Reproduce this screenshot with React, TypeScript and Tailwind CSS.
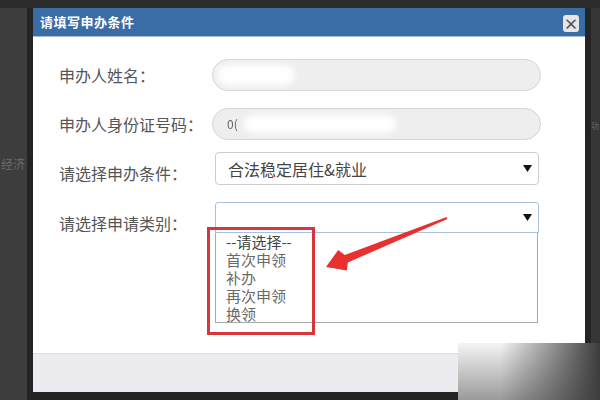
import React from "react";

const options = ["--请选择--", "首次申领", "补办", "再次申领", "换领"];

function Caret() {
  return (
    <svg width="9" height="7" viewBox="0 0 9 7">
      <path d="M0 0 L9 0 L4.5 7 Z" fill="#111" />
    </svg>
  );
}

export default function App() {
  return (
    <div className="relative w-[600px] h-[400px] overflow-hidden bg-[#3c3c3c] flex flex-col font-['Noto_Sans_CJK_SC','Noto_Sans',sans-serif]">
      <div className="h-[8px] bg-[#2c2c2c]" />
      <div className="flex flex-1 min-h-0">
        {/* backdrop left */}
        <div className="w-[27px] bg-[#3d3d3d] overflow-hidden pt-[147px] pl-[1px]">
          <div className="whitespace-nowrap text-[12px] text-[#6b6b6b]">经济</div>
        </div>

        {/* modal */}
        <div className="w-[564px] border-x-[6px] border-b-[8px] border-[#242424] flex flex-col">
          <div className="h-[29px] bg-[#3a6da6] border-b border-[#a5bedc] flex items-center justify-between pl-[7px] pr-[6px]">
            <span className="text-[13px] font-bold text-white tracking-[0.5px]">请填写申办条件</span>
            <div className="mt-[2px] w-[16px] h-[17px] rounded-[3px] bg-[#e6e6e6] flex items-center justify-center text-[#555] text-[15px] font-bold leading-none">
              ×
            </div>
          </div>

          <div className="flex-1 bg-white pl-[26px] text-[16px] text-[#555]">
            <div className="mt-[22px] flex items-center h-[32px]">
              <div className="w-[153px]">申办人姓名：</div>
              <div className="w-[329px] h-[32px] rounded-full bg-[#eeeeef] border border-[#d6d6d6] flex items-center pl-[4px]">
                <div className="w-[78px] h-[20px] rounded-full bg-white blur-[3px]" />
              </div>
            </div>

            <div className="mt-[17px] flex items-center h-[32px]">
              <div className="w-[153px]">申办人身份证号码：</div>
              <div className="w-[329px] h-[32px] rounded-full bg-[#eeeeef] border border-[#d6d6d6] flex items-center pl-[14px]">
                <span className="text-[12px] text-[#666] blur-[0.5px]">0(</span>
                <div className="ml-[6px] w-[152px] h-[18px] rounded-full bg-white blur-[3px]" />
              </div>
            </div>

            <div className="mt-[12px] flex items-center h-[33px]">
              <div className="w-[153px] mt-[8px]">请选择申办条件：</div>
              <div className="ml-[3px] w-[324px] h-[33px] rounded-[4px] border border-[#cccccc] flex items-center justify-between pl-[12px] pr-[6px] text-[#444]">
                <span>合法稳定居住&amp;就业</span>
                <Caret />
              </div>
            </div>

            <div className="mt-[17px] flex items-start">
              <div className="w-[153px] h-[31px] flex items-center mt-[5px]">请选择申请类别：</div>
              <div className="ml-[3px] flex flex-col">
                <div className="w-[324px] h-[31px] rounded-t-[3px] border border-[#a9c1dd] flex items-center justify-end pr-[6px]">
                  <Caret />
                </div>
                <div className="w-[323px] h-[90px] border border-t-0 border-[#a8a8a8] pl-[10px] flex flex-col text-[15px]">
                  {options.map((o, i) => (
                    <div key={o} className={"leading-[18px] " + (i === 0 ? "text-[#444]" : "text-[#6a6a6a]")}>
                      {o}
                    </div>
                  ))}
                </div>
              </div>
            </div>
          </div>

          <div className="h-[39px] bg-[#ecebef] border-t border-[#dcdcdc]" />
        </div>

        {/* backdrop right */}
        <div className="w-[9px] bg-[#363636] overflow-hidden pt-[112px]">
          <div className="whitespace-nowrap text-[8px] text-[#6b6b6b]">功</div>
        </div>
      </div>

      {/* annotation: red box */}
      <div className="absolute left-[207px] top-[227px] w-[108px] h-[108px] border-[3px] border-[#d8363a]" />

      {/* annotation: red arrow */}
      <svg className="absolute inset-0 pointer-events-none" width="600" height="400" viewBox="0 0 600 400">
        <polygon
          points="326,267 346.8,270.5 347.9,262.4 447.4,219 446.6,217 344.8,255 338.2,250"
          fill="#e8302f"
        />
      </svg>

      {/* watermark corner */}
      <div className="absolute left-[458px] top-[343px] w-[142px] h-[57px] bg-[linear-gradient(to_bottom,#f4f4f4,#9a9a9a)]">
        <div className="w-full h-full bg-[linear-gradient(to_right,transparent_30%,#3c3c3c)]" />
      </div>
    </div>
  );
}
